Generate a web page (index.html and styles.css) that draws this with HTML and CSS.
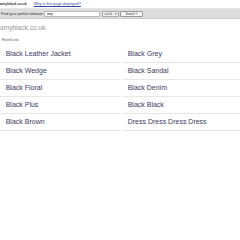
FILE: index.html
```html
<!DOCTYPE html>
<html>
<head>
    <link rel="stylesheet" href="styles.css">
    <title>amyblack.co.uk</title>
</head>
<body>
    <div class="topline">
        <span class="domain">amyblack.co.uk</span>
        <a href="#" class="why">Why is this page displayed?</a>
    </div>
    <div class="searchbar">
        <span class="label">Find your perfect domain</span>
        <input type="text" class="box" value="amy">
        <span class="tld">.co.uk <b>&#9662;</b></span>
        <button class="go">Search &raquo;</button>
    </div>
    <h1 class="title">amyblack.co.uk</h1>
    <p class="related">Related Links</p>
    <div class="links">
        <a href="#" class="link">Black Leather Jacket</a>
        <a href="#" class="link">Black Grey</a>
        <a href="#" class="link">Black Wedge</a>
        <a href="#" class="link">Black Sandal</a>
        <a href="#" class="link">Black Floral</a>
        <a href="#" class="link">Black Denim</a>
        <a href="#" class="link">Black Plus</a>
        <a href="#" class="link">Black Black</a>
        <a href="#" class="link">Black Brown</a>
        <a href="#" class="link">Dress Dress Dress Dress</a>
    </div>
</body>
</html>
```

FILE: styles.css
```css
*{
    margin: 0px;
    padding: 0px;
    box-sizing: border-box;
}
body{
    background-color: #fff;
    font-family: "Liberation Sans", Arial, sans-serif;
}
.topline{
    display: flex;
    align-items: center;
    height: 8px;
    padding-left: 0px;
}
.domain{
    font-size: 3.6px;
    font-weight: bold;
    color: #333;
}
.why{
    margin-left: 7px;
    font-size: 3.8px;
    color: #3344aa;
}
.searchbar{
    display: flex;
    align-items: center;
    height: 11px;
    background-color: #dddddd;
    border-top: 1px solid #e6e6e6;
    border-bottom: 1px solid #cdcdcd;
    padding-left: 1px;
    white-space: nowrap;
}
.label{
    font-size: 3.8px;
    color: #333;
    width: 43px;
}
.box{
    width: 56px;
    height: 6px;
    border: 1px solid #bbb;
    font-size: 3px;
    padding-left: 2px;
    font-family: "Liberation Sans", Arial, sans-serif;
}
.tld{
    margin-left: 2px;
    width: 17px;
    height: 6px;
    font-size: 3px;
    color: #333;
    background-color: #f0f0f0;
    border: 1px solid #aaa;
    padding: 0px 1px;
    display: flex;
    align-items: center;
    justify-content: space-between;
}
.tld b{
    font-size: 3px;
}
.go{
    margin-left: 1px;
    width: 23px;
    height: 6px;
    font-size: 3px;
    line-height: 4px;
    color: #333;
    background-color: #f4f4f4;
    border: 1px solid #999;
    border-radius: 1px;
    font-family: "Liberation Sans", Arial, sans-serif;
}
.title{
    font-size: 6.6px;
    font-weight: normal;
    color: #999;
    margin-top: 5px;
    padding-left: 0px;
}
.related{
    font-size: 2.8px;
    color: #555;
    margin-top: 7px;
    padding-left: 2px;
}
.links{
    display: grid;
    grid-template-columns: 120px 118px;
    column-gap: 2px;
    margin-top: 4px;
}
.link{
    display: block;
    height: 17px;
    line-height: 16px;
    border-bottom: 1px solid #e6e6e6;
    font-size: 7px;
    color: #3b3b63;
    text-decoration: none;
    padding-left: 3px;
}
.link::before{
    content: "\00b7";
    font-size: 5px;
    color: #777;
    margin-right: 1px;
}
```
